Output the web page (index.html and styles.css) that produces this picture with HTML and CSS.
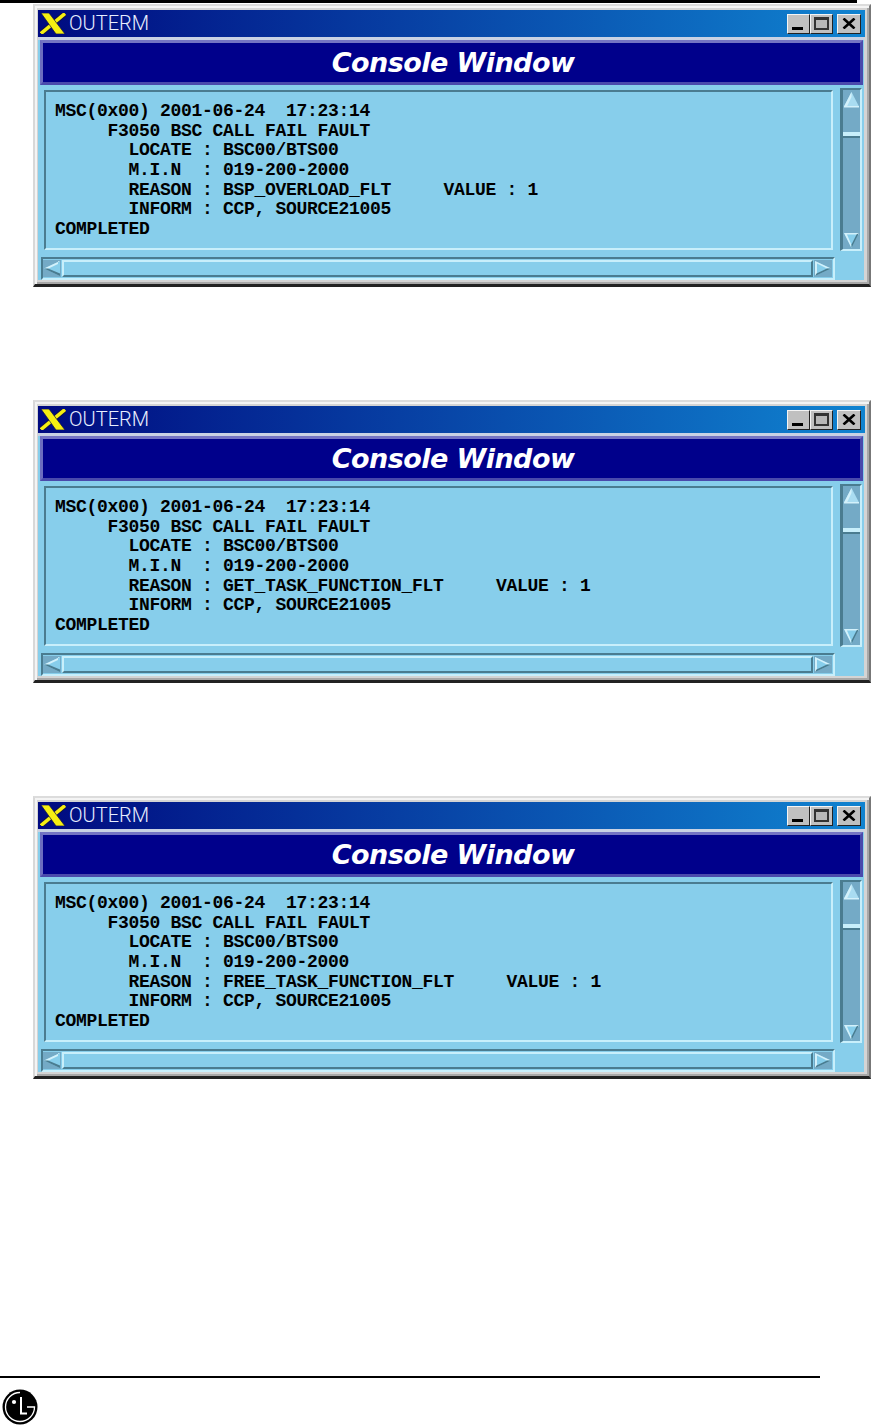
FILE: index.html
```html
<!DOCTYPE html>
<html lang="en">
<head>
<meta charset="utf-8">
<title>OUTERM Console Window</title>
<link rel="stylesheet" href="styles.css">
</head>
<body>
<svg class="defs" width="0" height="0" aria-hidden="true">
  <symbol id="xlogo" viewBox="0 0 26 21">
    <path d="M25 .5 1 20.500" stroke="#10104a" stroke-width="5.500" fill="none"/>
    <path d="M25 .5 1 20.500" stroke="#f6ef12" stroke-width="3.500" fill="none"/>
    <path d="M1 0H9L25 21H16Z" fill="#f6ef12" stroke="#10104a" stroke-width=".7"/>
  </symbol>
  <symbol id="au" viewBox="0 0 17 17">
    <path d="M8.500 1 1 15.500H16Z" fill="#a9dcf1"/>
    <path d="M8.500 1 1 15.500H4L8.500 6Z" fill="#d3f1fb"/>
    <path d="M1 15h15v1.500H1Z" fill="#d3f1fb"/>
  </symbol>
  <symbol id="ad" viewBox="0 0 17 17">
    <path d="M1 1H16L8.500 16Z" fill="#87ceeb"/>
    <path d="M1 1H16V2.500H4L8.500 13 8.500 16Z" fill="#d3f1fb"/>
    <path d="M16 1 8.500 16V12.500L13.500 2.500Z" fill="#4a7c90"/>
  </symbol>
  <symbol id="al" viewBox="0 0 18 17">
    <path d="M17 1V16L1 8.500Z" fill="#87ceeb"/>
    <path d="M17 1 1 8.500 4.500 9 15 4V1Z" fill="#d3f1fb"/>
    <path d="M1 8.500 17 16V13.500L5 8.500Z" fill="#4a7c90"/>
  </symbol>
  <symbol id="ar" viewBox="0 0 18 17">
    <path d="M1 1V16L17 8.500Z" fill="#87ceeb"/>
    <path d="M1 1 17 8.500H13L3 3.500V14L1 16Z" fill="#d3f1fb"/>
    <path d="M1 16 17 8.500H13L2.500 13.500Z" fill="#4a7c90"/>
  </symbol>
  <symbol id="closex" viewBox="0 0 14 11">
    <path d="M1.500 .5 12.500 10.500M12.500 .5 1.500 10.500" stroke="#000" stroke-width="2.600" fill="none"/>
  </symbol>
</svg>

<div class="page">
  <div class="toprule"></div>

  <section class="win">
    <div class="titlebar">
      <svg class="xicon"><use href="#xlogo"/></svg>
      <span class="apptitle">OUTERM</span>
      <div class="btns">
        <span class="btn"><i class="g-min"></i></span>
        <span class="btn"><i class="g-max"></i></span>
        <span class="btn btn-close"><svg class="g-close"><use href="#closex"/></svg></span>
      </div>
    </div>
    <div class="panel">
      <div class="banner">Console Window</div>
      <div class="body">
        <div class="toprow">
          <pre class="log">MSC(0x00) 2001-06-24  17:23:14
     F3050 BSC CALL FAIL FAULT
       LOCATE : BSC00/BTS00
       M.I.N  : 019-200-2000
       REASON : BSP_OVERLOAD_FLT     VALUE : 1
       INFORM : CCP, SOURCE21005
COMPLETED</pre>
          <div class="vscroll">
            <svg class="arrow-v"><use href="#au"/></svg>
            <span class="thumb"></span>
            <svg class="arrow-v arrow-end"><use href="#ad"/></svg>
          </div>
        </div>
        <div class="hscroll">
          <svg class="arrow-h"><use href="#al"/></svg>
          <span class="htrack"></span>
          <svg class="arrow-h"><use href="#ar"/></svg>
        </div>
      </div>
    </div>
  </section>

  <section class="win">
    <div class="titlebar">
      <svg class="xicon"><use href="#xlogo"/></svg>
      <span class="apptitle">OUTERM</span>
      <div class="btns">
        <span class="btn"><i class="g-min"></i></span>
        <span class="btn"><i class="g-max"></i></span>
        <span class="btn btn-close"><svg class="g-close"><use href="#closex"/></svg></span>
      </div>
    </div>
    <div class="panel">
      <div class="banner">Console Window</div>
      <div class="body">
        <div class="toprow">
          <pre class="log">MSC(0x00) 2001-06-24  17:23:14
     F3050 BSC CALL FAIL FAULT
       LOCATE : BSC00/BTS00
       M.I.N  : 019-200-2000
       REASON : GET_TASK_FUNCTION_FLT     VALUE : 1
       INFORM : CCP, SOURCE21005
COMPLETED</pre>
          <div class="vscroll">
            <svg class="arrow-v"><use href="#au"/></svg>
            <span class="thumb"></span>
            <svg class="arrow-v arrow-end"><use href="#ad"/></svg>
          </div>
        </div>
        <div class="hscroll">
          <svg class="arrow-h"><use href="#al"/></svg>
          <span class="htrack"></span>
          <svg class="arrow-h"><use href="#ar"/></svg>
        </div>
      </div>
    </div>
  </section>

  <section class="win">
    <div class="titlebar">
      <svg class="xicon"><use href="#xlogo"/></svg>
      <span class="apptitle">OUTERM</span>
      <div class="btns">
        <span class="btn"><i class="g-min"></i></span>
        <span class="btn"><i class="g-max"></i></span>
        <span class="btn btn-close"><svg class="g-close"><use href="#closex"/></svg></span>
      </div>
    </div>
    <div class="panel">
      <div class="banner">Console Window</div>
      <div class="body">
        <div class="toprow">
          <pre class="log">MSC(0x00) 2001-06-24  17:23:14
     F3050 BSC CALL FAIL FAULT
       LOCATE : BSC00/BTS00
       M.I.N  : 019-200-2000
       REASON : FREE_TASK_FUNCTION_FLT     VALUE : 1
       INFORM : CCP, SOURCE21005
COMPLETED</pre>
          <div class="vscroll">
            <svg class="arrow-v"><use href="#au"/></svg>
            <span class="thumb"></span>
            <svg class="arrow-v arrow-end"><use href="#ad"/></svg>
          </div>
        </div>
        <div class="hscroll">
          <svg class="arrow-h"><use href="#al"/></svg>
          <span class="htrack"></span>
          <svg class="arrow-h"><use href="#ar"/></svg>
        </div>
      </div>
    </div>
  </section>

  <footer class="foot">
    <div class="footrule"></div>
    <svg class="lg" viewBox="0 0 36 36">
      <circle cx="18" cy="18" r="17.500" fill="#000"/>
      <path d="M18 3.500A14.500 14.500 0 1 0 32.500 18H25" fill="none" stroke="#fff" stroke-width="1.300"/>
      <circle cx="12" cy="13" r="2.100" fill="#fff"/>
      <path d="M19 8V24.500H25" fill="none" stroke="#fff" stroke-width="2"/>
    </svg>
  </footer>
</div>
</body>
</html>
```

FILE: styles.css
```css
* { box-sizing: border-box; }

html, body {
  margin: 0;
  padding: 0;
  background: #fff;
}

.defs { position: absolute; }

.page {
  width: 871px;
  height: 1425px;
  display: flex;
  flex-direction: column;
  overflow: hidden;
}

.toprule {
  width: 857px;
  height: 3px;
  background: #000;
  margin-bottom: 1px;
  flex: none;
}

.win {
  flex: none;
  width: 838px;
  height: 283px;
  margin-left: 33px;
  margin-bottom: 113px;
  display: flex;
  flex-direction: column;
  background: #d4d4d4;
  border-style: solid;
  border-width: 2px 2px 3px 2px;
  border-color: #dcdcdc #777 #222 #d8d8d8;
  padding: 4px 4px 4px 3px;
  box-shadow: inset 2px 2px 0 #f4f4f4, inset -2px -2px 0 #a8a8a8;
}

.titlebar {
  flex: none;
  height: 27px;
  display: flex;
  align-items: center;
  padding: 0 4px 0 2px;
  background: linear-gradient(to right, #000a80 0%, #1083d0 100%);
}

.xicon {
  width: 26px;
  height: 21px;
  flex: none;
}

.apptitle {
  margin: 0 0 2px 3px;
  font: 300 20px/1 Roboto, "Liberation Sans", sans-serif;
  color: #e8eeff;
}

.btns {
  margin-left: auto;
  display: flex;
}

.btn {
  width: 23px;
  height: 20px;
  background: #c0c0c0;
  border: 1px solid;
  border-color: #f4f4f4 #222 #222 #f4f4f4;
  display: flex;
  align-items: center;
  justify-content: center;
}

.btn-close {
  width: 24px;
  margin-left: 4px;
}

.g-min {
  width: 11px;
  height: 3px;
  margin: 10px 3px 0 0;
  background: #000;
}

.g-max {
  width: 15px;
  height: 13px;
  border: 2px solid #333;
  border-top-width: 3px;
  background: #b8b8b8;
}

.g-close {
  width: 14px;
  height: 11px;
}

.panel {
  flex: 1;
  min-height: 0;
  margin-right: 1px;
  padding-left: 2px;
  padding-right: 1px;
  background: #87ceeb;
  border-top: 3px solid #c9d2e4;
  display: flex;
  flex-direction: column;
}

.banner {
  flex: none;
  height: 45px;
  background: #00008b;
  border: 3px solid;
  border-color: #7474c4 #4a4aac #4a4aac #6c6cc0;
  padding-left: 3px;
  color: #fff;
  font: italic 700 27px/39px "DejaVu Sans", Verdana, sans-serif;
  letter-spacing: -.55px;
  text-align: center;
}

.body {
  flex: 1;
  min-height: 0;
  display: flex;
  flex-direction: column;
  padding: 5px 0 0 4px;
}

.toprow {
  flex: none;
  height: 161px;
  display: flex;
  align-items: flex-start;
}

.log {
  flex: none;
  width: 789px;
  height: 160px;
  margin: 0;
  padding: 10px 0 0 9px;
  border: 2px solid;
  border-color: #4a7c90 #c8effb #c8effb #4a7c90;
  font: 700 18px/19.630px "Liberation Mono", "Courier New", monospace;
  letter-spacing: -.3px;
  color: #000;
  white-space: pre;
  overflow: hidden;
}

.vscroll {
  flex: none;
  width: 22px;
  height: 163px;
  margin-left: 7px;
  margin-top: -2px;
  background: #74aac6;
  border-style: solid;
  border-width: 2px 2px 2px 3px;
  border-color: #4a7c90 #c8effb #c8effb #4a7c90;
  padding: 1px 0 0;
  display: flex;
  flex-direction: column;
}

.arrow-v {
  width: 17px;
  height: 17px;
  flex: none;
}

.arrow-end { margin-top: auto; }

.thumb {
  flex: none;
  width: 17px;
  height: 6px;
  margin-top: 24px;
  background: #c8effb;
  border-bottom: 2px solid #4a7c90;
}

.hscroll {
  flex: none;
  width: 794px;
  height: 23px;
  margin-top: 6px;
  margin-left: -3px;
  border: 2px solid;
  border-color: #4a7c90 #c8effb #c8effb #4a7c90;
  display: flex;
  align-items: center;
  gap: 1px;
  padding-right: 1px;
}

.arrow-h {
  width: 18px;
  height: 17px;
  flex: none;
  background: #74aac6;
}

.htrack {
  flex: 1;
  height: 17px;
  border: 2px solid;
  border-color: #c8effb #4a7c90 #4a7c90 #c8effb;
}

.foot {
  flex: none;
  margin-top: 184px;
}

.footrule {
  width: 820px;
  height: 2px;
  background: #000;
}

.lg {
  display: block;
  width: 36px;
  height: 36px;
  margin: 11px 0 0 2px;
}
```
